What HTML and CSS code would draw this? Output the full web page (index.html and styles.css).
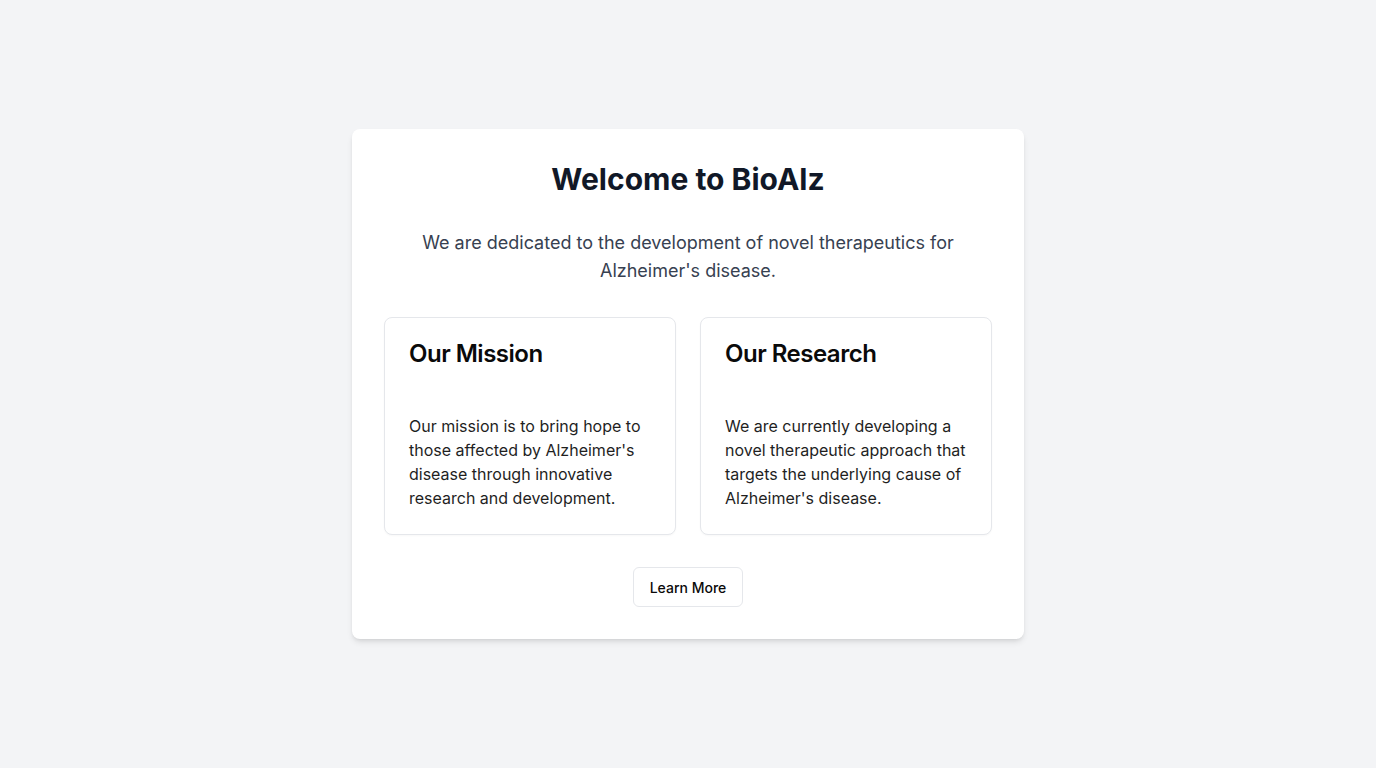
FILE: index.html
```html
<!DOCTYPE html>
<html lang="en">
<head>
<meta charset="utf-8">
<title>BioAlz</title>
<link rel="stylesheet" href="styles.css">
</head>
<body>
<main class="page">
  <section class="panel">
    <h1 class="title">Welcome to BioAlz</h1>
    <p class="lead">We are dedicated to the development of novel therapeutics for Alzheimer's disease.</p>
    <div class="grid">
      <div class="card">
        <h2 class="card-title">Our Mission</h2>
        <p class="card-text">Our mission is to bring hope to those affected by Alzheimer's disease through innovative research and development.</p>
      </div>
      <div class="card">
        <h2 class="card-title">Our Research</h2>
        <p class="card-text">We are currently developing a novel therapeutic approach that targets the underlying cause of Alzheimer's disease.</p>
      </div>
    </div>
    <div class="actions">
      <button class="btn" type="button">Learn More</button>
    </div>
  </section>
</main>
</body>
</html>
```
FILE: styles.css
```css
* { box-sizing: border-box; }
html, body { margin: 0; padding: 0; }
body {
  background: #f3f4f6;
  font-family: Inter, "Liberation Sans", sans-serif;
  color: #0a0a0a;
}
.page {
  min-height: 100vh;
  display: flex;
  align-items: center;
  justify-content: center;
}
.panel {
  width: 672px;
  background: #ffffff;
  border-radius: 8px;
  box-shadow: 0 4px 6px -1px rgba(0,0,0,0.1), 0 2px 4px -2px rgba(0,0,0,0.1);
  padding: 32px;
  text-align: center;
}
.title {
  margin: 0;
  font-size: 30px;
  line-height: 36px;
  font-weight: 700;
  color: #111827;
}
.lead {
  margin: 32px 0 0;
  font-size: 18px;
  line-height: 28px;
  color: #374151;
}
.grid {
  margin-top: 32px;
  display: grid;
  grid-template-columns: 1fr 1fr;
  gap: 24px;
  text-align: left;
}
.card {
  border: 1px solid #e5e7eb;
  border-radius: 8px;
  background: #fff;
  box-shadow: 0 1px 2px 0 rgba(0,0,0,0.03);
  padding: 24px;
}
.card-title {
  margin: 0;
  font-size: 24px;
  line-height: 24px;
  font-weight: 600;
  letter-spacing: -0.5px;
  color: #0a0a0a;
}
.card-text {
  margin: 48px 0 0;
  font-size: 16px;
  line-height: 24px;
  color: #1f1f1f;
}
.actions {
  margin-top: 32px;
  display: flex;
  justify-content: center;
}
.btn {
  height: 40px;
  padding: 0 16px;
  border: 1px solid #e5e7eb;
  border-radius: 6px;
  background: #fff;
  font-family: Inter, "Liberation Sans", sans-serif;
  font-size: 14px;
  font-weight: 500;
  color: #0a0a0a;
  cursor: pointer;
}
```
